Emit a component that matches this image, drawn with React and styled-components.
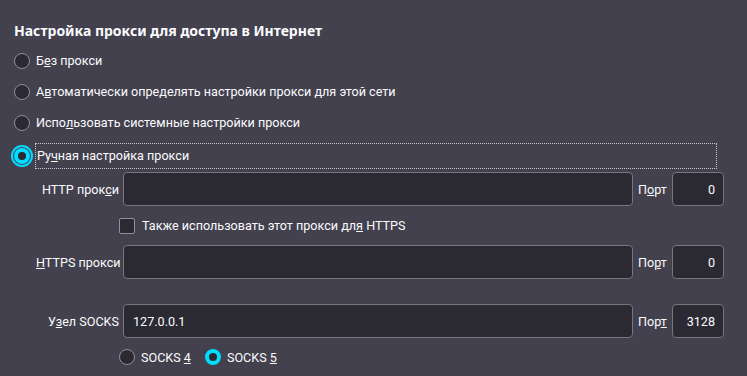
import styled, { createGlobalStyle, css } from 'styled-components';

const GlobalStyle = createGlobalStyle`
    html, body {
        margin: 0;
        background: #42414d;
        color: #fbfbfe;
        font-family: Roboto, "Noto Sans", sans-serif;
        font-size: 12.6px;
    }
`;

const Key = ({ text, k }) => {
    const i = text.indexOf(k);
    if (i < 0) return text;
    return (
        <>
            {text.slice(0, i)}
            <u>{k}</u>
            {text.slice(i + k.length)}
        </>
    );
};

const Page = styled.div`
    padding: 20px 14px 0 14px;
    width: 747px;
    height: 376px;
    box-sizing: border-box;
    overflow: hidden;
`;

const Heading = styled.h2`
    margin: 0 0 8px;
    font-family: "Noto Sans", Roboto, sans-serif;
    font-size: 14px;
    font-weight: 700;
    line-height: 22px;
`;

const Options = styled.div`
    display: flex;
    flex-direction: column;
    gap: 9px;
`;

const Option = styled.label`
    display: flex;
    align-items: center;
    gap: 6px;
    height: ${({ $focus }) => ($focus ? 26 : 22)}px;
`;

const OptionText = styled.span`
    flex: ${({ $focus }) => ($focus ? 1 : '0 0 auto')};
    line-height: 24px;
    ${({ $focus }) => $focus && css`
        outline: 1px dotted #c8c8cc;
        margin-right: 17px;
        padding-left: 1px;
    `}
`;

const Radio = styled.span`
    flex: 0 0 auto;
    width: 16px;
    height: 16px;
    box-sizing: border-box;
    border-radius: 50%;
    background: #2b2a33;
    border: 1px solid #8f8f9d;
    ${({ $checked }) => $checked && css`
        border: 4px solid #00ddff;
    `}
    ${({ $focus }) => $focus && css`
        box-shadow: 0 0 0 1px #42414d, 0 0 0 3px #00ddff;
    `}
`;

const Form = styled.div`
    display: grid;
    grid-template-columns: 83px 510px 31px 52px;
    column-gap: 4px;
    padding-left: 22px;
    margin-top: 3px;
    align-items: center;
`;

const Label = styled.span`
    text-align: right;
    white-space: nowrap;
`;

const PortLabel = styled.span`
    padding-left: 1px;
`;

const Field = styled.div`
    height: 34px;
    box-sizing: border-box;
    background: #2b2a33;
    border: 1px solid #77767f;
    border-radius: 4px;
    padding: 0 8px 0 9px;
    display: flex;
    align-items: center;
    justify-content: ${({ $right }) => ($right ? 'flex-end' : 'flex-start')};
`;

const SubRow = styled.div`
    grid-column: 2 / 5;
    display: flex;
    align-items: center;
    gap: 7px;
    height: ${({ $h }) => $h}px;
`;

const Checkbox = styled.span`
    width: 16px;
    height: 16px;
    box-sizing: border-box;
    border: 1px solid #8f8f9d;
    border-radius: 2px;
    background: #2b2a33;
    margin-left: -4px;
`;

const Spacer = styled.div`
    grid-column: 1 / 5;
    height: ${({ $h }) => $h}px;
`;

const SocksChoice = styled.label`
    display: flex;
    align-items: center;
    gap: 6px;
    margin-right: 7px;
`;

const SmallRadio = styled(Radio)`
    ${({ $first }) => $first && css`margin-left: -4px;`}
`;

const App = () => (
    <Page>
        <GlobalStyle />
        <Heading>Настройка прокси для доступа в Интернет</Heading>
        <Options>
            <Option>
                <Radio />
                <OptionText><Key text="Без прокси" k="е" /></OptionText>
            </Option>
            <Option>
                <Radio />
                <OptionText><Key text="Автоматически определять настройки прокси для этой сети" k="в" /></OptionText>
            </Option>
            <Option>
                <Radio />
                <OptionText><Key text="Использовать системные настройки прокси" k="л" /></OptionText>
            </Option>
            <Option $focus>
                <Radio $checked $focus />
                <OptionText $focus><Key text="Ручная настройка прокси" k="ч" /></OptionText>
            </Option>
        </Options>
        <Form>
            <Label>HTTP прок<u>с</u>и</Label>
            <Field />
            <PortLabel>П<u>о</u>рт</PortLabel>
            <Field $right>0</Field>

            <span />
            <SubRow $h={39}>
                <Checkbox />
                <span>Также использовать этот прокси дл<u>я</u> HTTPS</span>
            </SubRow>

            <Label><u>H</u>TTPS прокси</Label>
            <Field />
            <PortLabel>По<u>р</u>т</PortLabel>
            <Field $right>0</Field>

            <Spacer $h={25} />

            <Label>У<u>з</u>ел SOCKS</Label>
            <Field>127.0.0.1</Field>
            <PortLabel>Пор<u>т</u></PortLabel>
            <Field $right>3128</Field>

            <span />
            <SubRow $h={38}>
                <SocksChoice>
                    <SmallRadio $first />
                    <span>SOCKS <u>4</u></span>
                </SocksChoice>
                <SocksChoice>
                    <SmallRadio $checked />
                    <span>SOCKS <u>5</u></span>
                </SocksChoice>
            </SubRow>
        </Form>
    </Page>
);

export default App;
